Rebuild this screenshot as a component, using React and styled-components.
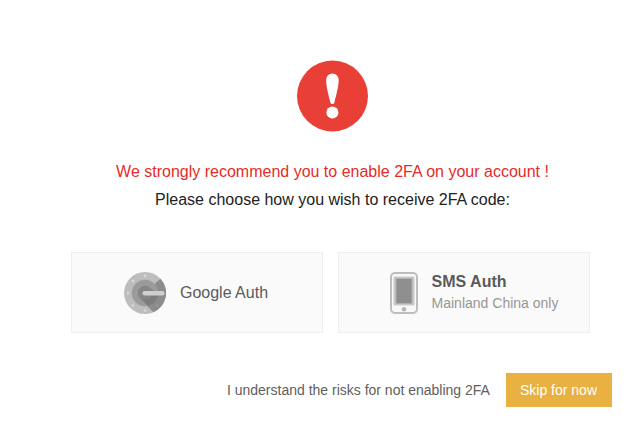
import styled, { createGlobalStyle } from "styled-components";

const GlobalStyle = createGlobalStyle`
  * {
    box-sizing: border-box;
  }
  body {
    margin: 0;
    background: #fff;
    font-family: "Liberation Sans", Arial, sans-serif;
  }
`;

const Page = styled.main`
  padding: 60px 28px 20px 53px;
`;

const Notice = styled.header`
  display: flex;
  flex-direction: column;
  align-items: center;
  text-align: center;
`;

const AlertIcon = styled.svg`
  width: 71px;
  height: 72px;
  margin-bottom: 26px;
`;

const Message = styled.p`
  margin: 0;
  font-size: 16px;
  line-height: 28px;
  color: ${(props) => (props.$warning ? "#e52c27" : "#222")};
`;

const Options = styled.div`
  display: grid;
  grid-template-columns: 1fr 1fr;
  gap: 15px;
  margin-top: 38px;
  padding: 0 22px 0 18px;
`;

const Option = styled.button`
  display: flex;
  align-items: center;
  justify-content: center;
  gap: 14px;
  height: 81px;
  padding: ${(props) => (props.$indent ? "0 0 0 20px" : "0 2px 0 0")};
  border: 1px solid #eee;
  background: #fafafa;
  font-family: inherit;
  text-align: left;
  cursor: pointer;
`;

const OptionIcon = styled.svg`
  width: ${(props) => props.$width}px;
  height: 42px;
`;

const OptionText = styled.span`
  display: flex;
  flex-direction: column;
`;

const OptionTitle = styled.span`
  font-size: 16px;
  line-height: 20px;
  font-weight: ${(props) => (props.$bold ? "bold" : "normal")};
  color: #5a5a5a;
`;

const OptionNote = styled.span`
  font-size: 14px;
  line-height: 22px;
  color: #969696;
`;

const Footer = styled.footer`
  display: flex;
  align-items: center;
  justify-content: flex-end;
  gap: 16px;
  margin-top: 40px;
`;

const Risk = styled.span`
  font-size: 14px;
  color: #606060;
`;

const SkipButton = styled.button`
  height: 34px;
  padding: 0 15px 0 14px;
  border: 0;
  background: #e8b141;
  color: #fff;
  font-family: inherit;
  font-size: 14px;
  cursor: pointer;
`;

function App() {
  return (
    <>
      <GlobalStyle />
      <Page>
        <Notice>
          <AlertIcon viewBox="0 0 72 72" aria-hidden="true">
            <circle cx="36" cy="36" r="36" fill="#e83f36" />
            <path d="M29.5 19.6a6.4 6.4 0 0 1 12.8 0c0 7-3.1 18-4.5 23.6q-.3 1-1.9 1t-1.9-1c-1.4-5.6-4.5-16.6-4.5-23.6z" fill="#fff" />
            <circle cx="35.9" cy="52.8" r="6.1" fill="#fff" />
          </AlertIcon>
          <Message $warning>We strongly recommend you to enable 2FA on your account !</Message>
          <Message>Please choose how you wish to receive 2FA code:</Message>
        </Notice>
        <Options>
          <Option type="button">
            <OptionIcon $width={42} viewBox="0 0 42 42" aria-hidden="true">
              <circle cx="21" cy="21" r="21" fill="#bdbdbd" />
              <path d="M36.5 6.7A21 21 0 0 1 29.5 40.2L16 27l8-14 6.5-1z" fill="#8c8c8c" />
              <circle cx="21" cy="21" r="13.2" fill="#9b9b9b" />
              <path d="M16 26A7 7 0 0 1 16 16q5-4.5 10 0l8.2 5A13.2 13.2 0 0 1 24.5 33.7z" fill="#858585" />
              <path d="M16 26l8 8a13.2 13.2 0 0 0 10.2-13H21z" fill="#7d7d7d" />
              <circle cx="21" cy="21" r="7" fill="#858585" />
              <rect x="18.5" y="19" width="22" height="4.4" rx="2.2" fill="#cfcfcf" />
              <g fill="#d6d6d6">
                <circle cx="21" cy="4" r="1.4" />
                <circle cx="9" cy="9" r="1.4" />
                <circle cx="4" cy="21" r="1.4" />
                <circle cx="9" cy="33.5" r="1.4" />
                <circle cx="21" cy="38.5" r="1.4" />
              </g>
              <circle cx="33" cy="33.5" r="1.3" fill="#979797" />
            </OptionIcon>
            <OptionText>
              <OptionTitle>Google Auth</OptionTitle>
            </OptionText>
          </Option>
          <Option type="button" $indent>
            <OptionIcon $width={28} viewBox="0 0 28 42" aria-hidden="true">
              <rect x="1" y="1" width="26" height="40" rx="4" fill="#f8f8f8" stroke="#bdbdbd" strokeWidth="2" />
              <rect x="3.5" y="4.5" width="21" height="29" rx="1" fill="#c9c9c9" />
              <rect x="6" y="6.5" width="16" height="25" fill="#8f8f8f" stroke="#b0b0b0" />
              <circle cx="14" cy="37.2" r="2.2" fill="#b5b5b5" />
            </OptionIcon>
            <OptionText>
              <OptionTitle $bold>SMS Auth</OptionTitle>
              <OptionNote>Mainland China only</OptionNote>
            </OptionText>
          </Option>
        </Options>
        <Footer>
          <Risk>I understand the risks for not enabling 2FA</Risk>
          <SkipButton type="button">Skip for now</SkipButton>
        </Footer>
      </Page>
    </>
  );
}

export default App;
